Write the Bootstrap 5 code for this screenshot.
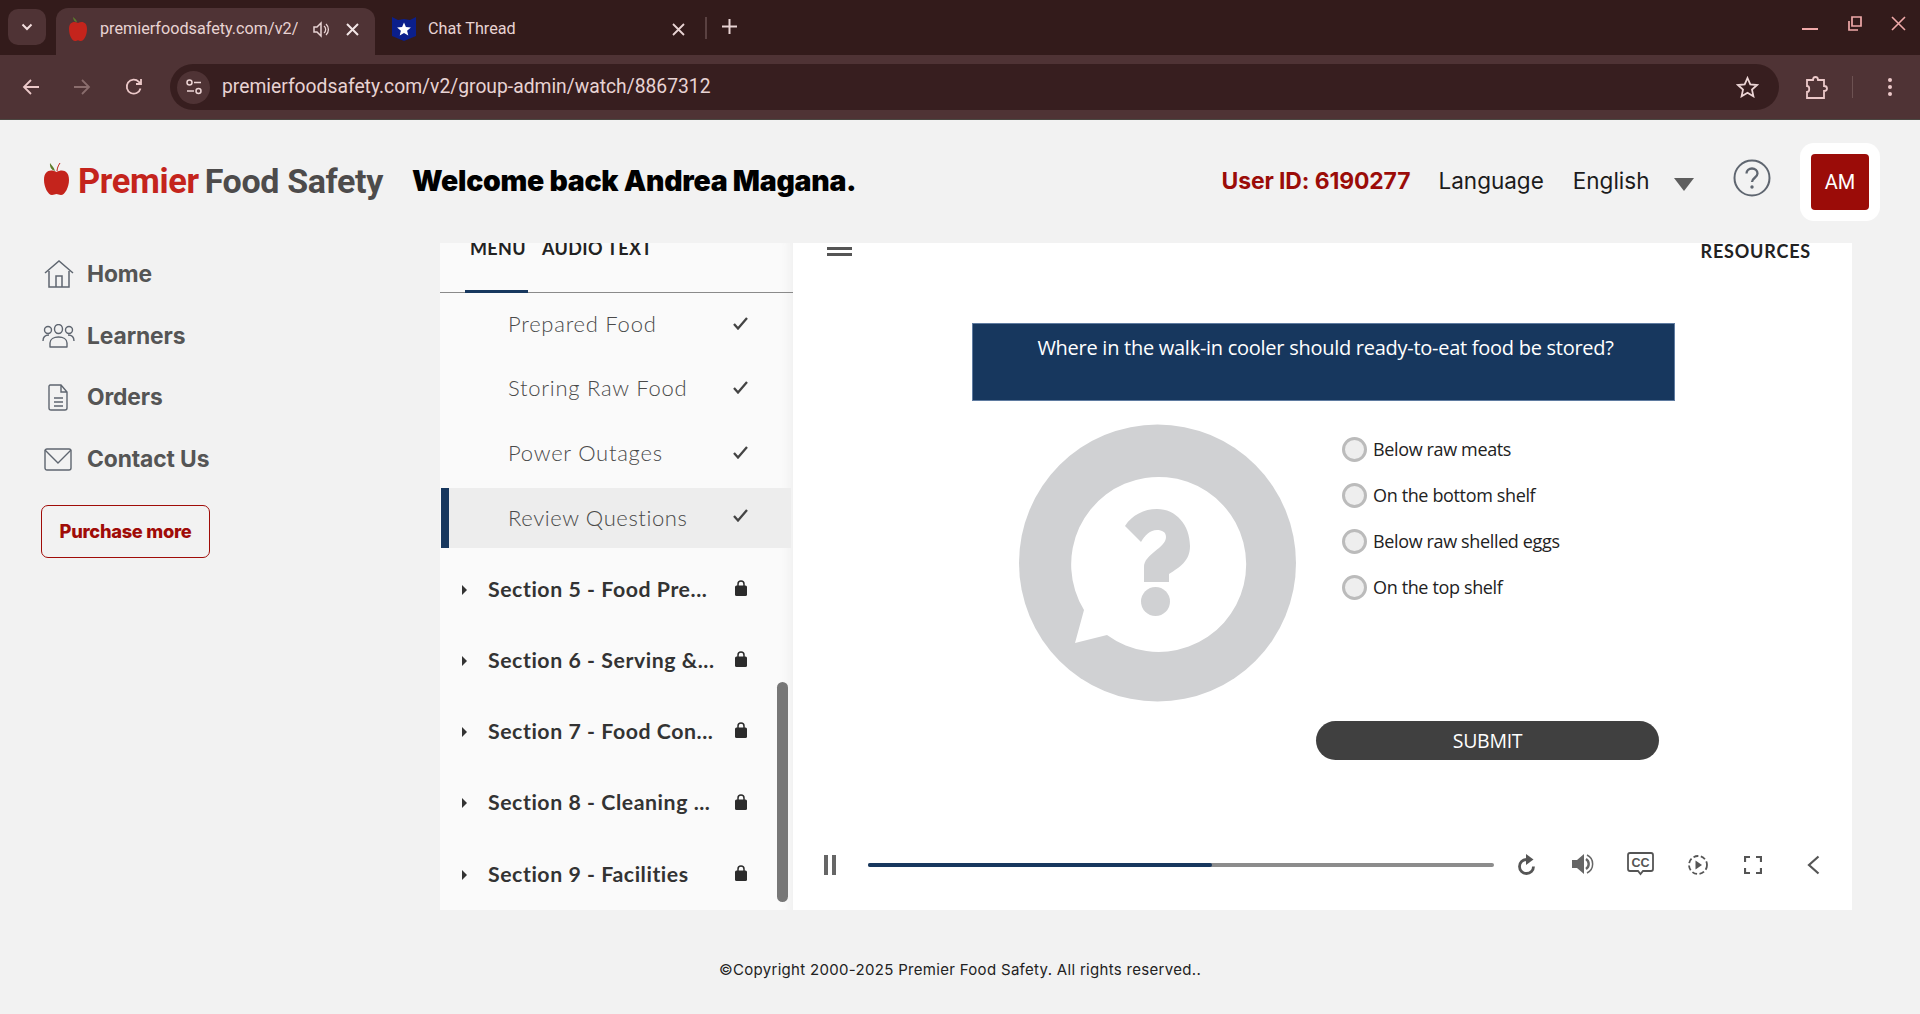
<!DOCTYPE html>
<html lang="en">
<head>
<meta charset="utf-8">
<title>Premier Food Safety</title>
<link href="https://cdn.jsdelivr.net/npm/bootstrap@5.3.0/dist/css/bootstrap.min.css" rel="stylesheet">
<style>
html,body{height:100%;margin:0}
body{background:#f2f2f2;overflow:hidden;font-family:Roboto,"Liberation Sans",sans-serif;color:#222}
svg{display:block;flex:none}
.tab-strip{height:55px;background:#331b1b;color:#e8d3d3;font-size:16.2px;padding-left:8px}
.tab-switch{width:38px;height:36px;margin-top:9px;border-radius:10px;background:#4f3335}
.tab-live{width:319px;height:47px;margin:8px 0 0 10px;padding:0 0 5px 12px;border-radius:12px 12px 0 0;background:#4f3335}
.tab-label{width:198px;margin-left:12px;white-space:nowrap;overflow:hidden}
.tab-idle{width:314px;height:47px;margin:8px 0 0 0;padding:0 0 5px 17px}
.tab-sep{width:2px;height:22px;background:#5a4141;margin:17px 0 0 16px}
.tab-plus{margin:19px 0 0 15px}
.win-ctrls{margin-left:auto;padding-right:14px;gap:29px}
.tool-bar{height:65px;background:#4f3335;border-bottom:1px solid #4b4742;padding-left:22px}
.tb-fwd{margin-left:33px}
.tb-reload{margin-left:34px}
.omni{width:1609px;height:46px;margin-left:27px;border-radius:23px;background:#371e1f;padding:0 20px 0 7px;color:#e8d3d3;font-size:19.3px}
.omni-chip{width:33px;height:33px;border-radius:50%;background:#4f3335}
.omni-url{margin-left:12px}
.tb-ext{margin-left:26px}
.tb-sep{width:1px;height:22px;background:#6d5252;margin-left:23px}
.tb-dots{margin-left:35px}
.top-head{height:123px;padding-left:43px}
.apple{margin-bottom:7px}
.brand-red{font-size:34.4px;font-weight:700;color:#c4241c;letter-spacing:-.35px;margin-left:8px}
.brand-grey{font-size:34px;font-weight:700;color:#4d4b4b;letter-spacing:-.35px;margin-left:6px}
.welcome{font-family:Inter,sans-serif;font-weight:900;font-size:28.4px;color:#000;margin-left:29px;letter-spacing:-.25px}
.uid{font-family:Inter,sans-serif;font-weight:700;font-size:22.9px;color:#9b0c08;margin-left:auto;letter-spacing:-.1px}
.lang{font-family:Inter,sans-serif;font-size:22.5px;color:#1c1c1c;margin-bottom:2px}
.lang-a{margin-left:28px}
.lang-b{margin-left:29px}
.caret-ico{margin:6px 0 0 24.500px}
.help-ico{margin:0 0 7px 39px}
.avatar-wrap{width:80px;height:78px;background:#fff;border-radius:14px;margin:0 40px 0 29px}
.avatar-box{width:58px;height:56px;background:#9b0c08;border-radius:4px;color:#fff;font-size:20px}
.main-row{height:667px}
.side{width:440px;padding:0 0 0 41px}
.side-item{height:61.8px;font-family:Inter,sans-serif;font-weight:700;font-size:22.8px;color:#555;letter-spacing:-.1px}
.side-ico{width:46px;flex:none}
.ico-home{margin-left:3px}
.ico-people{margin-left:1px}
.ico-doc{margin-left:7px}
.ico-mail{margin-left:3px}
.buy-btn{width:169px;height:53px;margin-top:15px;border:1px solid #a00c08;border-radius:7px;color:#a00c08;font-family:Inter,sans-serif;font-weight:800;font-size:18.3px;letter-spacing:-.3px;background:transparent;padding:0}
.menu-pane{width:353px;background:#fafafa;box-shadow:inset -12px 0 10px -8px #f0f0f0;font-family:Lato,sans-serif;position:relative;overflow:hidden}
.menu-tabs{height:50px;border-bottom:1px solid #8a8a8a;padding-left:30px;gap:16px;font-weight:700;font-size:18px;letter-spacing:.35px;color:#222;line-height:10px;position:relative}
.tab-under{position:absolute;left:25px;bottom:-1px;width:63px;height:3px;background:#17375e}
.lesson{height:64.3px;padding:0 0 3px 68px;font-size:22px;font-weight:300;color:#4a4a4a;letter-spacing:.75px;position:relative}
.lesson.current{height:60px;margin:2px 2px 0 1px;padding:0 0 0 59px;border-left:8px solid #17375e;background:#ededed;letter-spacing:.6px}
.check{position:absolute;left:293px}
.lesson.current .check{left:284px;top:21px}
.sect{height:71.3px;padding-left:22px;font-size:21.3px;font-weight:700;color:#333;position:relative;letter-spacing:.55px}
.sect-name{margin-left:21px;white-space:nowrap}
.lock{position:absolute;left:295px;top:26px}
.first-sect{margin-top:6px}
.scroll-thumb{position:absolute;left:337px;top:439px;width:11px;height:220px;border-radius:6px;background:#777}
.slide{width:1059px;background:#fff;position:relative;overflow:hidden}
.slide-top{height:80px;padding:0 41px 0 34px}
.res{font-family:Lato,sans-serif;font-weight:700;font-size:18px;letter-spacing:.8px;color:#222;line-height:1;margin-top:-1px}
.burger{width:25px;height:9px;margin-top:4px;border-top:3px solid #555;border-bottom:3px solid #555;box-sizing:border-box}
.q-box{width:703px;height:78px;margin-left:179px;background:#17375e;color:#fff;font-family:"Open Sans",sans-serif;font-size:20px;text-align:center;padding:9px 0 0 4px;letter-spacing:-.27px;font-weight:400;border:1px solid #5f7ba0}
.q-body{padding-left:226px;margin-top:23px}
.q-ring{width:278px;height:278px}
.q-opts{margin-left:45px;padding-top:2px;font-family:"Open Sans",sans-serif;font-size:18px;letter-spacing:-.36px;color:#222;width:343px}
.opt{height:46px;gap:6px}
.opt-dot{width:25px;height:25px;border-radius:50%;background:#eee;border:3px solid #bbb}
.submit-btn{width:343px;height:39px;border-radius:20px;background:#404040;color:#fff;font-size:19.5px;letter-spacing:-.3px;border:0;padding:0;font-family:"Open Sans",sans-serif}
.submit-row{padding-left:523px;margin-top:19px}
.player{position:absolute;left:0;right:0;top:610px;height:24px}
.pause{position:absolute;left:31px;top:2px;width:12px;height:20px;border-left:4px solid #666;border-right:4px solid #666}
.track{position:absolute;left:75px;top:10px;width:626px;height:4px;border-radius:2px;background:#8c8c8c}
.track-fill{height:4px;border-radius:2px;background:#17375e}
.pl-ico{position:absolute;top:0}
.pl-replay{left:724px}
.pl-vol{left:779px}
.pl-cc{left:834px;top:-1px}
.pl-play{left:895px;top:2px}
.pl-full{left:951px;top:3px}
.pl-back{left:1014px;top:2px}
.foot{font-family:Inter,sans-serif;font-size:15px;color:#222;text-align:center;margin-top:49px;letter-spacing:.31px}
</style>
</head>
<body>
<div class="tab-strip d-flex align-items-start">
  <div class="tab-switch d-flex align-items-center justify-content-center">
    <svg width="12" height="8" viewBox="0 0 12 8"><path d="M1.5 1.5 6 6l4.5-4.5" fill="none" stroke="#f3dede" stroke-width="2"/></svg>
  </div>
  <div class="tab-live d-flex align-items-center">
    <svg width="20" height="26" viewBox="0 0 20 26"><path d="M10 7C6 5 1 6 1 13c0 6 3 12 6 12 1.500 0 2-.8 3-.8s1.500.8 3 .8c3 0 6-6 6-12 0-7-5-8-9-6z" fill="#c4241c"/><path d="M9 6C8 3 6 2 5 1c0 3 2 5 4 5z" fill="#5d7c2c"/></svg>
    <span class="tab-label">premierfoodsafety.com/v2/</span>
    <svg class="ms-auto" width="17" height="17" viewBox="0 0 17 17"><path d="M1 6v5h3l4 4V2L4 6z" fill="none" stroke="#e8d3d3" stroke-width="1.500"/><path d="M11 5a4.500 4.500 0 0 1 0 7M13 3a7.500 7.500 0 0 1 0 11" fill="none" stroke="#e8d3d3" stroke-width="1.300"/></svg>
    <svg class="ms-3 me-3" width="13" height="13" viewBox="0 0 13 13"><path d="M1 1l11 11M12 1 1 12" stroke="#f3e6e6" stroke-width="2"/></svg>
  </div>
  <div class="tab-idle d-flex align-items-center">
    <svg width="24" height="24" viewBox="0 0 24 24"><path d="M0 0l6 3 6-1 6 1 6-3v19l-12 5L0 19z" fill="#0b1f8c"/><path d="M12 5.500l1.900 4.600 5 .4-3.800 3.200 1.200 4.900-4.300-2.600-4.300 2.600 1.200-4.900-3.800-3.200 5-.4z" fill="#fff"/></svg>
    <span class="ms-2 ps-1">Chat Thread</span>
    <svg class="ms-auto me-1" width="13" height="13" viewBox="0 0 13 13"><path d="M1 1l11 11M12 1 1 12" stroke="#e8d3d3" stroke-width="1.800"/></svg>
  </div>
  <div class="tab-sep"></div>
  <svg class="tab-plus" width="15" height="15" viewBox="0 0 15 15"><path d="M7.500 0v15M0 7.500h15" stroke="#e8d3d3" stroke-width="2"/></svg>
  <div class="win-ctrls d-flex align-items-start pt-3">
    <svg width="16" height="14" viewBox="0 0 16 14"><path d="M0 13h16" stroke="#f0a9a9" stroke-width="2"/></svg>
    <svg width="15" height="15" viewBox="0 0 15 15"><path d="M5 1h9v9H5zM2 5v9h9" fill="none" stroke="#f0a9a9" stroke-width="1.700"/></svg>
    <svg width="15" height="15" viewBox="0 0 15 15"><path d="M1 1l13 13M14 1 1 14" stroke="#f0a9a9" stroke-width="1.600"/></svg>
  </div>
</div>
<div class="tool-bar d-flex align-items-center">
  <svg width="18" height="18" viewBox="0 0 18 18"><path d="M17 9H2M9 2 2 9l7 7" fill="none" stroke="#ecc9c9" stroke-width="1.800"/></svg>
  <svg class="tb-fwd" width="18" height="18" viewBox="0 0 18 18"><path d="M1 9h15M9 2l7 7-7 7" fill="none" stroke="#8a6d6d" stroke-width="1.800"/></svg>
  <svg class="tb-reload" width="18" height="18" viewBox="0 0 18 18"><path d="M15.500 10.500A7 7 0 1 1 13.800 3.800L16 6M16 1v5h-5" fill="none" stroke="#ecc9c9" stroke-width="1.800"/></svg>
  <div class="omni d-flex align-items-center">
    <div class="omni-chip d-flex align-items-center justify-content-center">
      <svg width="18" height="18" viewBox="0 0 18 18"><circle cx="4.500" cy="4.500" r="2.500" fill="none" stroke="#ecd5d5" stroke-width="1.500"/><path d="M9 4.500h7M2 13h7" stroke="#ecd5d5" stroke-width="1.500"/><circle cx="13.500" cy="13" r="2.500" fill="none" stroke="#ecd5d5" stroke-width="1.500"/></svg>
    </div>
    <span class="omni-url">premierfoodsafety.com/v2/group-admin/watch/8867312</span>
    <svg class="ms-auto" width="23" height="22" viewBox="0 0 23 22"><path d="M11.500 2l2.800 6.300 6.700.7-5 4.600 1.400 6.700-5.900-3.500-5.900 3.500 1.400-6.700-5-4.600 6.700-.7z" fill="none" stroke="#ecd5d5" stroke-width="1.800"/></svg>
  </div>
  <svg class="tb-ext" width="24" height="26" viewBox="0 0 24 26"><path d="M2 6h6c0-4 5-4 5 0h6v6c4 0 4 5 0 5v7H2v-6c3 0 3-6 0-6z" fill="none" stroke="#ecc9c9" stroke-width="1.800"/></svg>
  <div class="tb-sep"></div>
  <svg class="tb-dots" width="4" height="18" viewBox="0 0 4 18"><circle cx="2" cy="2" r="2" fill="#ecc9c9"/><circle cx="2" cy="9" r="2" fill="#ecc9c9"/><circle cx="2" cy="16" r="2" fill="#ecc9c9"/></svg>
</div>
<header class="top-head d-flex align-items-center">
  <svg class="apple" width="27" height="33" viewBox="0 0 27 33"><path d="M13.500 10C8 7 1 8 1 18c0 7 4 15 8 15 2 0 3-1 4.500-1s2.500 1 4.500 1c4 0 8-8 8-15 0-10-7-11-12.500-8z" fill="#c4241c"/><path d="M12 9C11 5 8 3 7 1c-.5 4 1.500 7 5 8z" fill="#5d7c2c"/><path d="M14 9c.3-3 1-5 3-8" fill="none" stroke="#c4241c" stroke-width="1"/></svg>
  <span class="brand-red">Premier</span><span class="brand-grey">Food Safety</span>
  <span class="welcome">Welcome back Andrea Magana.</span>
  <span class="uid">User ID: 6190277</span>
  <span class="lang lang-a">Language</span>
  <span class="lang lang-b">English</span>
  <svg class="caret-ico" width="20" height="13" viewBox="0 0 20 13"><path d="M0 0h20L10 13z" fill="#5e5e5e"/></svg>
  <svg class="help-ico" width="38" height="38" viewBox="0 0 38 38"><circle cx="19" cy="19" r="17.500" fill="none" stroke="#5f6670" stroke-width="2"/><path d="M13.500 14.500c0-3 2.500-5 5.500-5s5.500 2 5.500 5c0 4-5.500 4.500-5.500 8.500" fill="none" stroke="#5f6670" stroke-width="2.300"/><circle cx="19" cy="28" r="1.700" fill="#5f6670"/></svg>
  <div class="avatar-wrap d-flex align-items-center justify-content-center">
    <div class="avatar-box d-flex align-items-center justify-content-center">AM</div>
  </div>
</header>
<div class="main-row d-flex">
  <nav class="side">
    <div class="side-item d-flex align-items-center">
      <div class="side-ico"><svg class="ico-home" width="30" height="28" viewBox="0 0 30 28"><path d="M1 13 15 1l14 12M5 11v16h20V11M12 27v-11h6v11" fill="none" stroke="#5f6670" stroke-width="1.500"/></svg></div><span>Home</span>
    </div>
    <div class="side-item d-flex align-items-center">
      <div class="side-ico"><svg class="ico-people" width="33" height="24" viewBox="0 0 33 24"><circle cx="6" cy="6" r="3.500" fill="none" stroke="#5f6670" stroke-width="1.400"/><ellipse cx="16.500" cy="5" rx="4" ry="4.500" fill="none" stroke="#5f6670" stroke-width="1.400"/><circle cx="27" cy="6" r="3.500" fill="none" stroke="#5f6670" stroke-width="1.400"/><path d="M1 17c0-4 2-6 6-6M32 17c0-4-2-6-6-6" fill="none" stroke="#5f6670" stroke-width="1.400"/><path d="M8 23v-4c0-4 4-6 8.500-6s8.500 2 8.500 6v4z" fill="none" stroke="#5f6670" stroke-width="1.400" stroke-linejoin="round"/></svg></div><span>Learners</span>
    </div>
    <div class="side-item d-flex align-items-center">
      <div class="side-ico"><svg class="ico-doc" width="21" height="27" viewBox="0 0 21 27"><path d="M2 1h11l6 7v16q0 2-2 2H3q-2 0-2-2V2zM13 1v7h6M6 14h9M6 18h9M6 22h9" fill="none" stroke="#5f6670" stroke-width="1.400"/></svg></div><span>Orders</span>
    </div>
    <div class="side-item d-flex align-items-center">
      <div class="side-ico"><svg class="ico-mail" width="28" height="23" viewBox="0 0 28 23"><rect x="1" y="1" width="26" height="21" rx="2" fill="none" stroke="#5f6670" stroke-width="1.400"/><path d="M1 2l13 13L27 2" fill="none" stroke="#5f6670" stroke-width="1.400"/></svg></div><span>Contact Us</span>
    </div>
    <button class="buy-btn" type="button">Purchase more</button>
  </nav>
  <aside class="menu-pane">
    <div class="menu-tabs d-flex align-items-start"><span>MENU</span><span>AUDIO TEXT</span><div class="tab-under"></div></div>
    <div class="lesson d-flex align-items-center">Prepared Food<svg class="check" width="15" height="13" viewBox="0 0 15 13"><path d="M1 7l4 4.500L14 1" fill="none" stroke="#444" stroke-width="2.300"/></svg></div>
    <div class="lesson d-flex align-items-center">Storing Raw Food<svg class="check" width="15" height="13" viewBox="0 0 15 13"><path d="M1 7l4 4.500L14 1" fill="none" stroke="#444" stroke-width="2.300"/></svg></div>
    <div class="lesson d-flex align-items-center">Power Outages<svg class="check" width="15" height="13" viewBox="0 0 15 13"><path d="M1 7l4 4.500L14 1" fill="none" stroke="#444" stroke-width="2.300"/></svg></div>
    <div class="lesson current d-flex align-items-center">Review Questions<svg class="check" width="15" height="13" viewBox="0 0 15 13"><path d="M1 7l4 4.500L14 1" fill="none" stroke="#444" stroke-width="2.300"/></svg></div>
    <div class="sect first-sect d-flex align-items-center"><svg width="5" height="10" viewBox="0 0 5 10"><path d="M0 0l5 5-5 5z" fill="#333"/></svg><span class="sect-name">Section 5 - Food Pre...</span><svg class="lock" width="12" height="16" viewBox="0 0 12 16"><path d="M3 6V4a3 3 0 0 1 6 0v2" fill="none" stroke="#2b2b2b" stroke-width="1.500"/><rect y="5.500" width="12" height="10.500" rx="1.500" fill="#2b2b2b"/></svg></div>
    <div class="sect d-flex align-items-center"><svg width="5" height="10" viewBox="0 0 5 10"><path d="M0 0l5 5-5 5z" fill="#333"/></svg><span class="sect-name">Section 6 - Serving &amp;...</span><svg class="lock" width="12" height="16" viewBox="0 0 12 16"><path d="M3 6V4a3 3 0 0 1 6 0v2" fill="none" stroke="#2b2b2b" stroke-width="1.500"/><rect y="5.500" width="12" height="10.500" rx="1.500" fill="#2b2b2b"/></svg></div>
    <div class="sect d-flex align-items-center"><svg width="5" height="10" viewBox="0 0 5 10"><path d="M0 0l5 5-5 5z" fill="#333"/></svg><span class="sect-name">Section 7 - Food Con...</span><svg class="lock" width="12" height="16" viewBox="0 0 12 16"><path d="M3 6V4a3 3 0 0 1 6 0v2" fill="none" stroke="#2b2b2b" stroke-width="1.500"/><rect y="5.500" width="12" height="10.500" rx="1.500" fill="#2b2b2b"/></svg></div>
    <div class="sect d-flex align-items-center"><svg width="5" height="10" viewBox="0 0 5 10"><path d="M0 0l5 5-5 5z" fill="#333"/></svg><span class="sect-name">Section 8 - Cleaning ...</span><svg class="lock" width="12" height="16" viewBox="0 0 12 16"><path d="M3 6V4a3 3 0 0 1 6 0v2" fill="none" stroke="#2b2b2b" stroke-width="1.500"/><rect y="5.500" width="12" height="10.500" rx="1.500" fill="#2b2b2b"/></svg></div>
    <div class="sect d-flex align-items-center"><svg width="5" height="10" viewBox="0 0 5 10"><path d="M0 0l5 5-5 5z" fill="#333"/></svg><span class="sect-name">Section 9 - Facilities</span><svg class="lock" width="12" height="16" viewBox="0 0 12 16"><path d="M3 6V4a3 3 0 0 1 6 0v2" fill="none" stroke="#2b2b2b" stroke-width="1.500"/><rect y="5.500" width="12" height="10.500" rx="1.500" fill="#2b2b2b"/></svg></div>
    <div class="scroll-thumb"></div>
  </aside>
  <section class="slide">
    <div class="slide-top d-flex align-items-start justify-content-between">
      <div class="burger"></div><span class="res">RESOURCES</span>
    </div>
    <div class="q-box">Where in the walk-in cooler should ready-to-eat food be stored?</div>
    <div class="q-body d-flex">
      <svg class="q-ring" viewBox="0 0 278 278"><circle cx="138.500" cy="139" r="138.500" fill="#d0d1d3"/><path d="M65 186 56 219 88 211A87.500 87.500 0 1 0 65 186Z" fill="#fff"/><path d="M106 102C113 91 125 85 138 85 157 85 171 101 171 122 171 137 161 143 150 150V158H125V143C125 130 147 124 147 113 147 108 143 106 138 106 131 106 126 111 122 118Z" fill="#d0d1d3"/><circle cx="136.500" cy="177.500" r="14.500" fill="#d0d1d3"/></svg>
      <div class="q-opts">
        <div class="opt d-flex align-items-center"><span class="opt-dot"></span>Below raw meats</div>
        <div class="opt d-flex align-items-center"><span class="opt-dot"></span>On the bottom shelf</div>
        <div class="opt d-flex align-items-center"><span class="opt-dot"></span>Below raw shelled eggs</div>
        <div class="opt d-flex align-items-center"><span class="opt-dot"></span>On the top shelf</div>
      </div>
    </div>
    <div class="submit-row"><button class="submit-btn" type="button">SUBMIT</button></div>
    <div class="player">
      <div class="pause"></div>
      <div class="track"><div class="track-fill" style="width:55%"></div></div>
      <svg class="pl-ico pl-replay" width="20" height="24" viewBox="0 0 20 24"><path d="M16.500 13.500A7 7 0 1 1 9.500 6.500h2" fill="none" stroke="#555" stroke-width="2.800"/><path d="M9 1l7.500 5.500L9 12z" fill="#555"/></svg>
      <svg class="pl-ico pl-vol" width="23" height="22" viewBox="0 0 23 22"><path d="M0 7h5l7-6v20l-7-6H0z" fill="#666"/><path d="M14 6a6 6 0 0 1 0 10" fill="none" stroke="#666" stroke-width="2.400"/><path d="M15 2a10 10 0 0 1 0 18" fill="none" stroke="#666" stroke-width="1.500"/></svg>
      <svg class="pl-ico pl-cc" width="27" height="24" viewBox="0 0 27 24"><path d="M3 1h21q2 0 2 2v14q0 2-2 2h-8l-2.500 3-2.500-3H3q-2 0-2-2V3q0-2 2-2z" fill="none" stroke="#555" stroke-width="1.800"/><text x="13.500" y="14.800" text-anchor="middle" font-family="Liberation Sans,sans-serif" font-weight="700" font-size="12.500" fill="#555">CC</text></svg>
      <svg class="pl-ico pl-play" width="20" height="20" viewBox="0 0 20 20"><circle cx="10" cy="10" r="9" fill="none" stroke="#555" stroke-width="1.800" stroke-dasharray="5 2.500"/><path d="M7.500 5.500 14 10l-6.500 4.500z" fill="#555"/></svg>
      <svg class="pl-ico pl-full" width="18" height="18" viewBox="0 0 18 18"><path d="M1 6V1h5M12 1h5v5M17 12v5h-5M6 17H1v-5" fill="none" stroke="#555" stroke-width="2.200"/></svg>
      <svg class="pl-ico pl-back" width="13" height="20" viewBox="0 0 13 20"><path d="M11.500 1.500 2 10l9.500 8.500" fill="none" stroke="#555" stroke-width="2.200"/></svg>
    </div>
  </section>
</div>
<footer class="foot">©Copyright 2000-2025 Premier Food Safety. All rights reserved..</footer>
</body>
</html>
